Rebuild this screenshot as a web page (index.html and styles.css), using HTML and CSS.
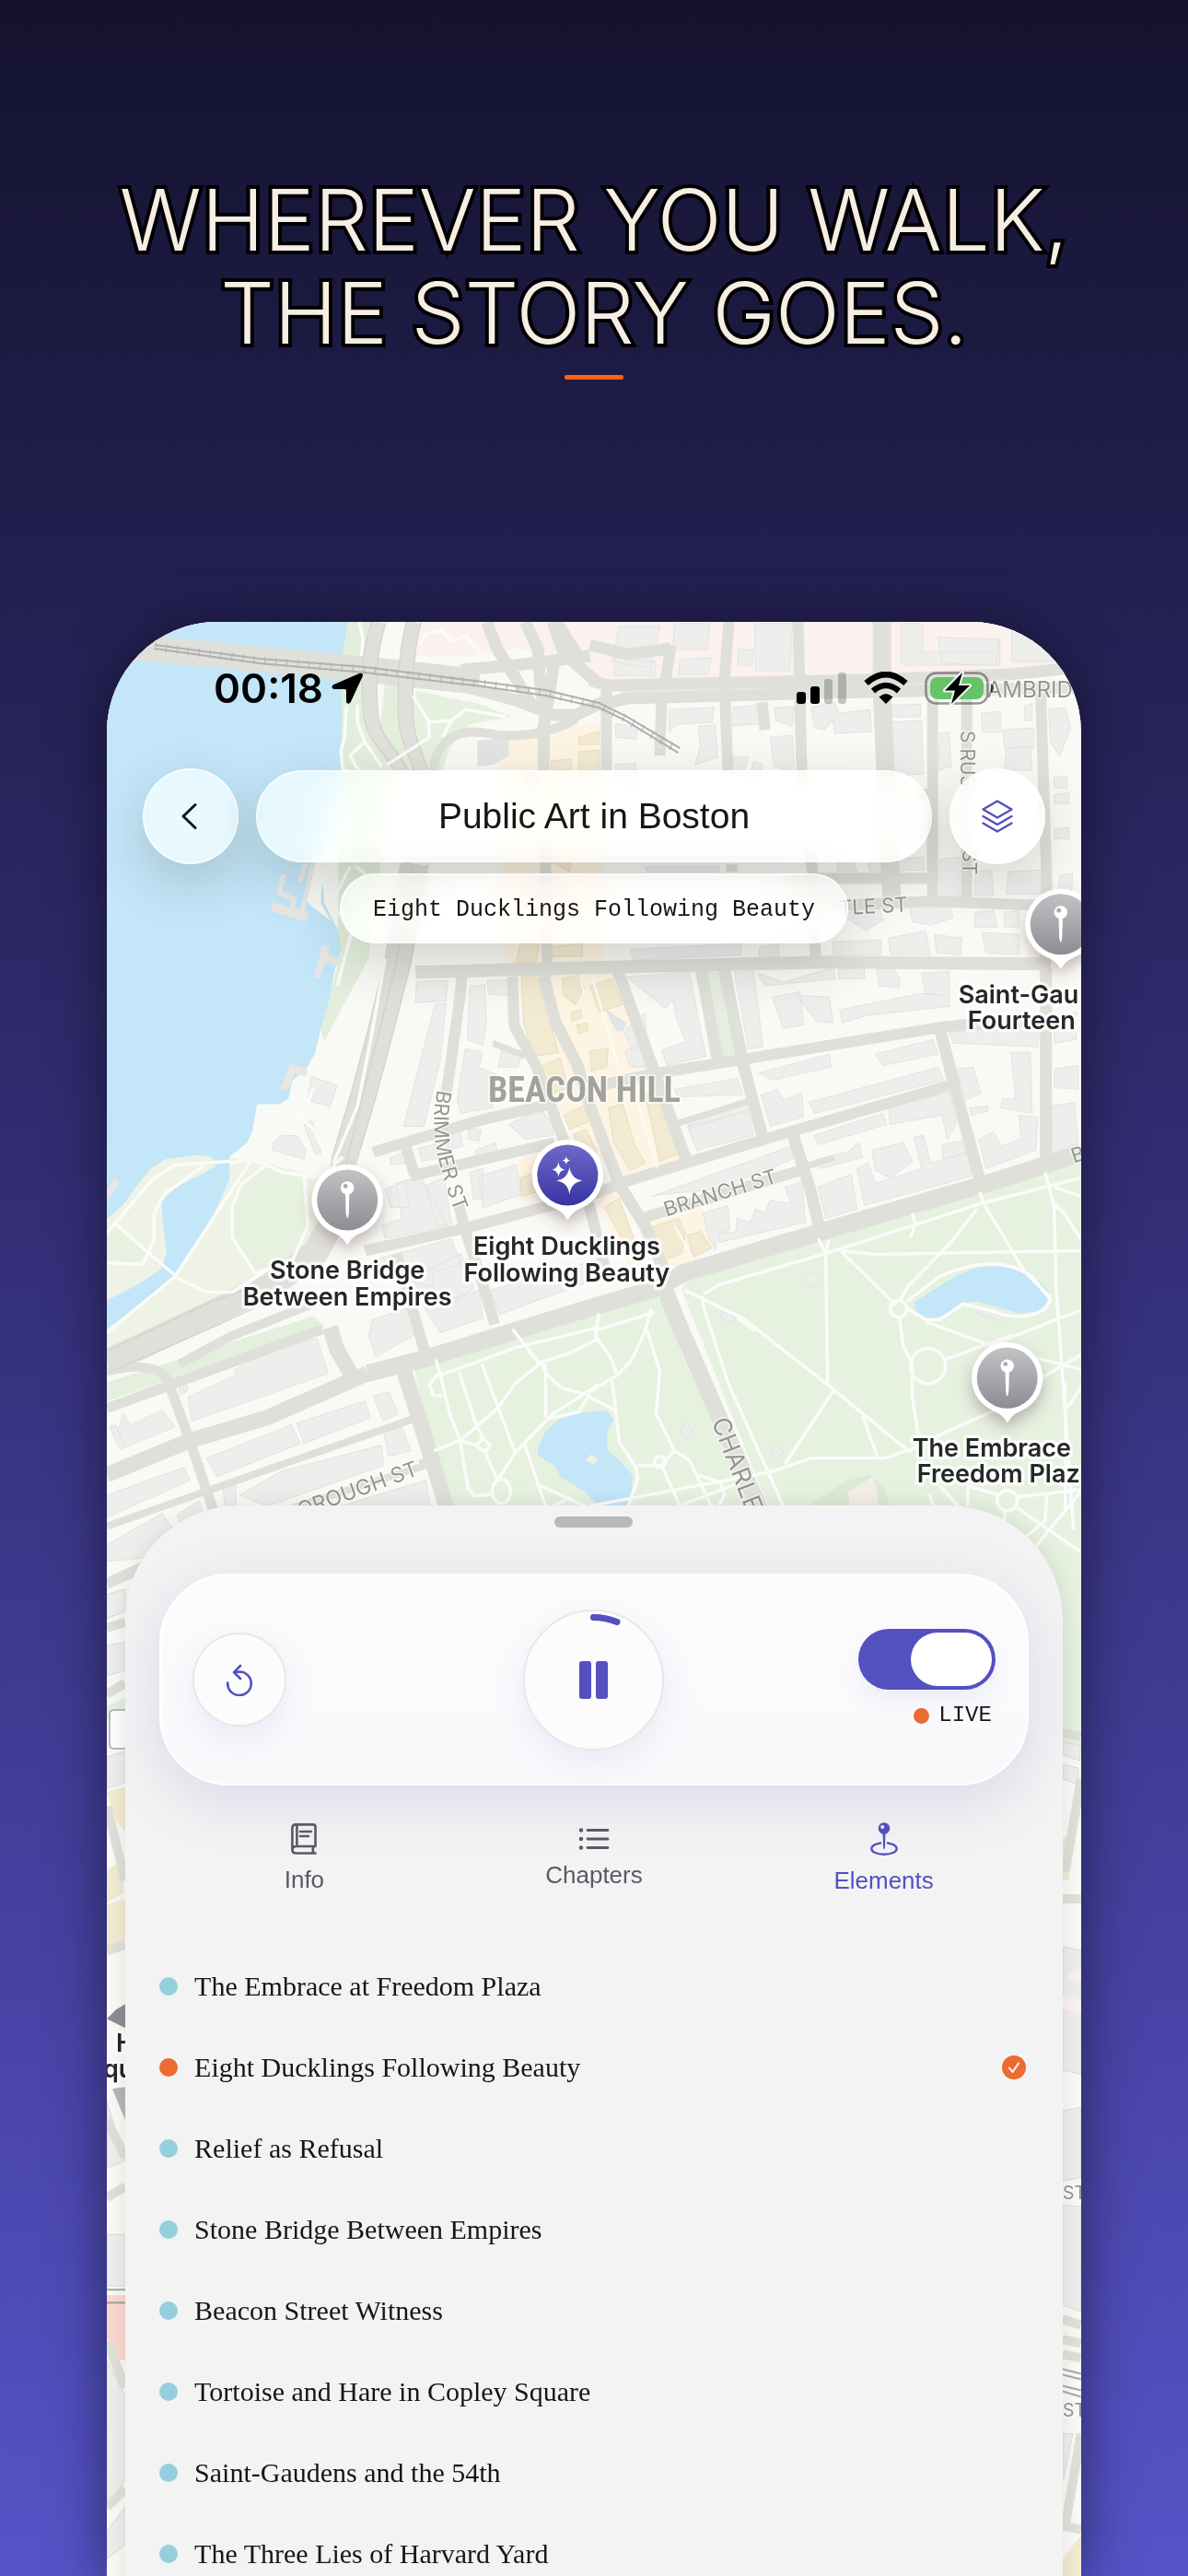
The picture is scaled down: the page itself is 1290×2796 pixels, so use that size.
FILE: index.html
```html
<!DOCTYPE html>
<html lang="en">
<head>
    <meta charset="UTF-8" />
    <meta name="viewport" content="width=device-width, initial-scale=1" />
    <title>Public Art in Boston</title>
    <link rel="stylesheet" href="styles.css">
</head>
<body>

<main class="page">
    <header class="hero">
        <h1>Wherever you walk,<br>the story goes.</h1>
        <div class="hero-line"></div>
    </header>

    <section class="phone">
        <!-- map background -->
        <svg class="map" viewBox="116 675 1057 2121" preserveAspectRatio="xMidYMin slice">
            <defs>
                <linearGradient id="pinGray" x1="0" y1="0" x2="0" y2="1">
                    <stop offset="0" stop-color="#c3c3c6" />
                    <stop offset="1" stop-color="#8d8c92" />
                </linearGradient>
                <linearGradient id="pinBlue" x1="0" y1="0" x2="0" y2="1">
                    <stop offset="0" stop-color="#6d6ac9" />
                    <stop offset="1" stop-color="#3733a3" />
                </linearGradient>
                <filter id="pinShadow" x="-50%" y="-50%" width="200%" height="200%">
                    <feDropShadow dx="0" dy="8" stdDeviation="8" flood-color="#5a3a40" flood-opacity="0.35" />
                </filter>
                <symbol id="marker" viewBox="-50 -50 100 110" overflow="visible">
                    <path fill="#fff" d="M0 -38.500A38.500 38.500 0 0 1 15 35.500C8 38.500 4 42 1.500 46.500Q0 49 -1.500 46.500C-4 42 -8 38.500 -15 35.500A38.500 38.500 0 0 1 0 -38.500Z" />
                </symbol>
                <symbol id="needle" viewBox="-50 -50 100 110" overflow="visible">
                    <circle r="33" fill="url(#pinGray)" />
                    <path fill="#fff" d="M-2.200 -8H2.200L1.600 14Q0 25 -1.600 14Z" />
                    <circle cy="-13" r="7.200" fill="#fff" />
                    <circle cx="-2" cy="-15" r="2.400" fill="#aaaaad" />
                </symbol>
                <path id="brimmer" d="M475 1182Q466 1222 477 1262T496 1320" />
            </defs>

            <rect x="116" y="675" width="1057" height="2121" fill="#f9faf5" />

            <!-- hospital area -->
            <path fill="#fbf1ef" d="M455 675H1173V732L938 742 658 744 628 716 560 704 510 712 446 712Z" />

            <!-- shopping streets -->
            <g fill="#fef4e3">
                <path d="M540 798 652 784 654 1048 549 1052Z" />
                <path d="M561 1058 668 1055 740 1257 672 1280 606 1205 575 1140Z" />
                <path d="M647 1303 668 1292 700 1370 684 1374Z" />
                <path d="M700 1328 763 1312 773 1353 742 1377 718 1370Z" />
                <path d="M563 1258 602 1246 610 1292 562 1304Z" />
            </g>

            <!-- parks -->
            <path fill="#e3efdc" d="M377 675H408L402 760 425 837 400 1040 352 1130 348 1117 366 1050 371 675Z" />
            <path fill="#e3efdc" d="M418 740 436 742 440 780 452 837H432L412 790Z" />
            <path fill="#e6f0de" d="M452 750 520 764 556 778 510 786 488 812 480 837H460L444 772Z" />
            <path fill="#eff3e5" d="M249 1256 290 1262 352 1278 372 1262 340 1345 290 1396 116 1482V1300L230 1255Z" />
            <path fill="#e6f1e0" d="M289 1263 329 1275 334 1327 317 1367 275 1380 253 1340V1307L263 1283Z" />
            <path fill="#e4efdd" d="M116 1500 340 1428 352 1440 116 1520Z" />
            <path fill="#e6f1e0" d="M449 1482 650 1424 712 1405 724 1420 742 1475 826 1640 836 1640 760 1450 740 1400 744 1386 895 1342 1066 1292 1173 1260V1900L480 1640Z" />
            <path fill="#dcead5" d="M877 1634 920 1606 944 1600 958 1612 966 1634Z" />
            <path fill="#f3eee8" d="M920 1618 948 1602 954 1634H922Z" />
            <path fill="#e6efdf" d="M767 1054H780L800 1150 784 1151Z" />
            <path fill="#e5efde" d="M672 748 938 740 1010 735V743L940 750 674 754Z" />

            <!-- water -->
            <path fill="#c3e6f8" d="M116 675H377L371 717V836L348 936 352 980 367 1010 370 1030 363 1053 358 1083 348 1117 342 1143 334 1157 317 1173 313 1192 303 1198H279L274 1227 268 1240 249 1255V1280L237 1307 224 1333 193 1380 155 1413 116 1442Z" />
            <path fill="#eff3e5" d="M116 1323 134 1307 148 1287 165 1267 179 1258 213 1253 230 1255 234 1266 213 1277 193 1287 175 1303 177 1330 181 1360 175 1377 151 1393 116 1411Z" />
            <path fill="#fafaf5" d="M352 928 348 980 360 1000 340 985 330 975 340 928Z" />
            <path fill="#e6f1e0" d="M116 1344 124 1329 162 1362 146 1370 116 1368Z" />
            <path fill="#c3e6f8" d="M992 1413 1012 1400 1040 1383 1061 1375 1085 1373 1110 1378 1131 1393 1138 1402 1136 1413 1128 1423 1106 1425 1061 1412 1043 1413 1026 1427 1008 1431 994 1423Z" />
            <path fill="#c3e6f8" d="M583 1573 592 1553 606 1540 627 1533 658 1530 666 1540 659 1553V1573L675 1587 686 1600V1615L679 1636H652L633 1617 609 1603 602 1590 585 1580Z" />
            <path fill="#edf2e3" d="M635 1584 641 1578 650 1583 644 1589Z" />
            <path fill="none" stroke="#ebe9e5" stroke-width="5" d="M308 949 303 969 319 975 317 988 328 991 340 935M332 936 326 957" />
            <path fill="#e9e7e3" d="M296 979 336 990 333 1000 294 989ZM350 1025 358 1028 356 1036 368 1040 366 1048 354 1044 346 1062 341 1060ZM315 1154 334 1160 332 1168 320 1165 312 1183 304 1181Z" />
            <path fill="#e9e7e3" d="M124 1278 130 1284 118 1300 116 1292Z" />

            <!-- buildings -->
            <g fill="#eeeeed" stroke="#e3e3e2" stroke-width="1">
                <path d="M672 680H716L706 725 664 718ZM732 677H770L768 705H730ZM668 714 712 718 710 734 666 733ZM738 716 772 714 768 732 736 732ZM819 677H860L857 728H820ZM801 704 818 706 816 722 801 722ZM978 677H1001V708H1076L1085 694V722H982L978 718ZM1018 692 1085 694 1080 722 1022 720ZM1098 680 1130 690 1150 712 1148 718H1098Z" />
                <path d="M726 770 775 768 773 784 735 786 726 794ZM668 786 692 788 690 802 668 800ZM758 788 776 787 779 822 754 830 760 810ZM795 768 820 765 828 785 795 788ZM840 768 862 767 860 788 842 782ZM880 768 906 762 910 774 944 770 946 794 906 796 904 782 894 792 884 790ZM963 766 999 764V778H966ZM963 784 1000 782 1002 840 968 842ZM1020 796 1030 794 1032 832 1018 836ZM1065 774 1086 772V795H1066ZM1088 792 1122 790V812H1090ZM1092 812 1118 810 1120 836H1090ZM1112 766 1120 764V782H1112ZM1138 770 1156 768 1162 790 1150 820 1140 806Z" />
                <path d="M790 820 812 822 806 842 790 838ZM818 826 828 830 824 846 812 846ZM836 800 860 798 862 838 840 832ZM668 830 690 828 692 858 668 850Z" />
                <path d="M700 940H780V946H702ZM910 936 926 934 930 945H908ZM942 934 1002 930 1003 944 944 946ZM1020 932 1042 930V972L1020 976ZM1058 946 1076 944 1078 972H1058ZM1094 946 1130 944V970H1092ZM1144 844 1158 842V855H1144ZM1144 862 1160 860V872H1144ZM1144 900 1160 898V910H1144ZM1150 950 1164 948 1162 980 1146 984Z" />
                <path d="M915 978 950 974 958 998 940 1010 918 996ZM986 978 1030 974 1034 996 1010 1004 990 1000ZM1058 990 1078 988 1082 1006 1058 1006ZM1090 990 1106 988V1006H1090Z" />
                <path d="M684 1030 804 1024V1036L688 1042ZM824 1028 844 1024 846 1038 824 1038ZM904 1022 956 1020V1036H904ZM964 1018 1004 1010 1010 1036H966ZM1014 1014 1044 1018 1042 1036 1016 1034ZM1066 1012 1106 1014V1036L1070 1034ZM840 1000 888 996 884 1008H842Z" />
                <path d="M452 1065 486 1064 484 1086 451 1088ZM472 1090 484 1088 478 1150 460 1222 438 1222ZM510 1070 526 1069 528 1112 524 1134 507 1128ZM529 1064 552 1063V1080L530 1079ZM505 1138 524 1142 520 1158 538 1166 534 1202 500 1208 496 1192ZM545 1140 566 1144 562 1158 540 1158Z" />
                <path d="M680 1060 748 1055 766 1146 724 1156 718 1140 744 1130 734 1104 730 1084 722 1094ZM797 1055 818 1054 828 1136 812 1138ZM822 1056 850 1066 904 1050 906 1062 830 1070ZM910 1052 938 1050V1062H910ZM951 1052 970 1050 976 1062 976 1072 954 1070ZM838 1082 868 1076 872 1112 850 1116ZM864 1080 900 1082 904 1110 886 1108ZM911 1096 950 1088 1000 1078 1030 1082V1092L940 1102 914 1110ZM1000 1056 1030 1054V1080L1004 1078ZM1030 1120 1128 1112 1126 1136 1034 1132ZM1144 1102 1168 1098V1128L1144 1132Z" />
                <path d="M690 1105 700 1100 702 1130 686 1140 678 1120ZM678 1140 698 1130 700 1158 684 1158ZM732 1182 800 1170 806 1188 736 1190ZM746 1222 812 1206 818 1232 756 1248ZM744 1216 808 1196 812 1204 750 1224ZM824 1164 900 1144 902 1158 838 1172ZM826 1188 844 1182 850 1194 870 1186 872 1212 836 1222ZM878 1196 1018 1158 1024 1172 884 1208ZM950 1144 1012 1128 1018 1144 958 1156ZM964 1200 1030 1186 1038 1218 1028 1236 1022 1210 966 1220ZM1038 1160 1056 1158 1064 1186 1048 1194ZM1097 1142 1118 1142 1120 1208 1086 1202 1088 1192 1102 1192ZM1052 1202 1072 1200V1206L1054 1210ZM1106 1210 1126 1212 1124 1248 1070 1268 1062 1236 1078 1228 1086 1244 1108 1236ZM1144 1160 1170 1156V1182L1144 1180ZM1142 1200 1166 1196 1170 1240 1142 1250Z" />
                <path d="M883 1232 958 1208 962 1220 888 1242ZM886 1258 920 1250 932 1240 936 1256 890 1268ZM946 1248 980 1240 990 1260 966 1278 950 1270ZM992 1234 1002 1232 1010 1262 1050 1250 1054 1276 938 1308 930 1268 942 1262 950 1284 1000 1268ZM1022 1242 1044 1238 1048 1252 1024 1258ZM888 1288 908 1280 924 1274 930 1312 896 1322Z" />
                <path d="M708 1298 752 1282 858 1244 864 1256 780 1290 716 1296ZM763 1316 790 1308 792 1334 780 1338V1348L874 1326 870 1282 852 1288 858 1306 836 1302 830 1316 820 1312 814 1326 800 1322 798 1338 780 1336 776 1356 768 1340Z" />
                <path d="M454 1246 478 1240 480 1256 458 1260ZM484 1232 500 1228 502 1244 484 1248ZM508 1224 522 1226 520 1238 508 1236ZM516 1248 538 1240 540 1252 518 1258ZM552 1220 586 1204 602 1220 600 1232 570 1236ZM520 1276 560 1264 566 1296 524 1310ZM430 1284 456 1276 486 1330 418 1344 414 1330 436 1322ZM424 1256 440 1250 440 1262 424 1264ZM462 1286 482 1278 490 1328 474 1330ZM418 1290 440 1282 444 1310 424 1310ZM510 1272 524 1268V1300L514 1302Z" />
                <path d="M338 1168 366 1178 358 1201 334 1194ZM297 1239 306 1232 322 1232 332 1248 330 1258 296 1248ZM330 1220 338 1216 348 1240V1252H342Z" />
                <path d="M410 1366 490 1344 500 1372 470 1380V1396L420 1384ZM450 1386 500 1360 514 1398 484 1420 452 1414ZM532 1400 650 1366 652 1386 542 1426ZM404 1432 446 1418 454 1446 408 1472 400 1450ZM460 1418 520 1400 524 1430 478 1446Z" />
                <path d="M271 1474 344 1452 356 1490 208 1542 204 1516 216 1510 256 1492 254 1488ZM194 1504 202 1500 204 1508 196 1514ZM134 1534 142 1546 176 1530 190 1548 136 1570 128 1552ZM119 1548 126 1546 136 1570 130 1572ZM224 1582 316 1546 326 1566 236 1602ZM322 1544 396 1520 402 1538 330 1566ZM405 1514 422 1510 432 1534 416 1542ZM116 1622 200 1592 206 1606 116 1646ZM260 1622 306 1596 414 1568 416 1590 290 1634ZM416 1552 436 1548 446 1574 422 1580ZM350 1640 462 1606 468 1640ZM192 1644 216 1628 220 1640 196 1652ZM116 1676 176 1642 190 1662 160 1690 116 1694ZM242 1614 256 1610V1636L244 1636Z" />
                <path d="M874 1386 886 1382 890 1392 880 1396ZM782 1426 792 1422 798 1432 788 1436ZM1058 1416 1090 1426 1088 1434 1060 1424ZM738 1550 746 1544 752 1556 742 1560ZM836 1572 846 1568 850 1576 842 1582Z" />
            </g>
            <g fill="#f3ead2" stroke="#eaddbf" stroke-width="1">
                <path d="M628 800 650 794V808H628ZM628 816 650 814V840H628ZM598 826 620 824V836H598ZM600 936 620 934 618 946ZM565 1024 585 1024 582 1044 560 1044ZM592 1028 632 1024V1038H594ZM566 1060 588 1058 590 1084 606 1142 580 1146 568 1110ZM583 1158 608 1148 616 1180 596 1188ZM610 1062 630 1058 634 1072 624 1090 612 1080ZM664 1062 676 1090 650 1098 640 1070ZM640 1140 660 1138 658 1158 642 1162ZM612 1210 634 1200 640 1216 618 1226ZM622 1230 636 1226 648 1250 630 1252ZM660 1202 676 1198 688 1240 700 1262 684 1270 666 1240ZM700 1188 718 1190 736 1252 716 1260ZM656 1310 672 1300 690 1350 684 1360ZM706 1332 736 1322 744 1338 740 1360 722 1366ZM746 1340 760 1336 772 1354 752 1364ZM565 1278 600 1266 604 1288 566 1298ZM620 1098 630 1096 632 1104 620 1108ZM626 1112 638 1110V1118L628 1122Z" />
            </g>
            <g fill="#e3e4e6">
                <path d="M518 804 552 800V820L536 830 518 832ZM656 1094 680 1110 676 1120 668 1118Z" />
            </g>

            <!-- roads -->
            <g fill="none" stroke="#e0e0da" stroke-linejoin="round">
                <path stroke-width="28" d="M116 700 151 703 400 727 520 740" />
                <path stroke-width="13" d="M500 727 560 722 640 712M500 744 560 760 600 776 625 776 658 760M528 675 540 705 562 740 580 770M570 675 584 705 586 740 590 770M600 675 612 710 650 742M604 675 632 720M602 716 590 790 590 837" />
                <path stroke-width="16" d="M411 675C399 715 400 735 402 770S422 808 436 838M449 675C440 710 440 740 440 770S448 808 458 840" />
                <path stroke-width="28" d="M450 937 432 1045 412 1123 394 1190 374 1257 362 1323 342 1360 300 1390 230 1425 116 1478" />
                <path stroke-width="10" d="M470 837C474 800 500 790 530 796S600 796 625 780M350 1410 250 1450 195 1480M116 1488Q170 1474 184 1500" />
                <path stroke-width="12" d="M658 740V838M791 675 786 740 790 838M866 675 870 837 882 950 885 1045M1012 760V980M1049 750V983M1129 745 1136 960 1134 1060M718 760 716 820M827 762 830 792M728 700 722 740M794 938V946" />
                <path stroke-width="20" d="M957 675V750L962 860 968 980" />
                <path stroke-width="13" d="M640 700 680 710 728 704M640 738 660 744 938 738 1096 732 1173 724M650 765 680 758 900 752 1173 746" />
                <path stroke-width="12" d="M850 956 886 953H1012M900 983 1010 978 1173 984M1012 862H990M1012 900V956M592 932 594 1060" />
                <path stroke-width="14" d="M451 1055 640 1050 900 1044 1134 1046M575 838 594 937" />
                <path stroke-width="13" d="M590 1060 602 1107 627 1157 640 1200 673 1287 700 1330 728 1395M668 1047 710 1163 745 1260M761 1053 780 1157M786 1053 807 1157 829 1240M861 1233 880 1293 891 1340M1021 1120 1036 1180 1064 1283M1135 1050V1265" />
                <path stroke-width="12" d="M654 1177 710 1165 815 1148 1019 1115 1047 1112 1135 1108M405 1250 523 1215 602 1197M446 1276 602 1240M396 1357 503 1333 650 1294 672 1284 833 1235 1033 1177M696 1322 868 1270M556 1060 558 1113 582 1157 609 1230 640 1310 660 1390M501 1060 499 1083 484 1190M440 1243 450 1275M497 1305 505 1335 523 1390 537 1437M430 1360 462 1470" />
                <path stroke-width="7" d="M735 1219 815 1194M535 1132 570 1146M868 1268 905 1256" />
                <path stroke-width="19" d="M1173 1250 1135 1264 1064 1286 893 1336 742 1381 712 1398 650 1416 461 1474 399 1490" />
                <path stroke-width="17" d="M399 1490 365 1505 290 1538 206 1563 116 1600M358 1440 366 1465 385 1498M436 1480 452 1530 486 1640" />
                <path stroke-width="18" d="M720 1395 738 1440 780 1537 826 1640" />
                <path stroke-width="11" d="M182 1498 205 1560 232 1640M116 1528 350 1442" />
                <path stroke-width="8" d="M447 1540 320 1584 116 1656M461 1590 317 1636M455 1588 470 1584" />
                <path stroke-width="12" d="M116 1718 160 1698" />
            </g>
            <g fill="none" stroke="#cfcfc8" stroke-width="1">
                <path d="M465 937 446 1045 426 1123 408 1190 388 1257M435 937 418 1040 398 1123 380 1190 360 1257M448 940 430 1045 410 1125 392 1195 376 1262 358 1335M403 675C391 715 392 735 394 770S414 808 428 838M457 675C448 710 448 740 448 770S456 808 466 840M441 675C432 710 432 740 432 770S440 808 450 840M419 675C407 715 408 735 410 770S430 808 444 838M116 1466 230 1412 280 1394M116 1490 236 1438 300 1408" />
            </g>

            <!-- rail -->
            <g fill="none" stroke="#b0b0b0">
                <path stroke-width="2" d="M168 700 282 715 396 724 523 740 592 749 650 763 679 777 738 812M168 704 282 720 396 730 523 745 592 755 650 768 679 782 736 817" />
                <path stroke-width="9" stroke-dasharray="1 11" d="M168 702 282 717 396 727 523 742 592 752 650 766 679 780 737 815" />
            </g>

            <!-- footpaths -->
            <g fill="none" stroke="#fbfcfa" stroke-width="3.500" stroke-linejoin="round">
                <path d="M390 675 394 695 392 712M376 765 374 800 370 815 372 836 380 837M396 805 380 820 390 838M388 765V785L396 805 414 832M448 755 465 782 466 800 420 830M465 784 490 782 505 770 550 778M490 782 480 800M455 700 462 688 480 684 490 696 506 690 520 708" />
                <path d="M380 940 360 980 382 1010 366 1070M386 940 398 950 378 978M418 1040 402 1130 388 1200 362 1262M340 1180 328 1215M249 1262 272 1258 289 1264 306 1272 349 1278 372 1255M279 1212Q310 1196 340 1225L358 1262M116 1338 165 1280 190 1264 249 1260M222 1264 178 1296 167 1318V1345L155 1372 116 1370M124 1327 162 1360 195 1388 225 1402 252 1402 290 1378M272 1260 190 1385 116 1446M289 1264 262 1285 252 1310V1342L276 1380M330 1275 334 1330 318 1366 276 1382" />
                <path d="M473 1475 478 1492 488 1534 499 1562 508 1615 515 1623 536 1621M478 1492 560 1462 650 1440M556 1442 584 1478 588 1478M498 1488 517 1546 524 1560M523 1480 559 1576M650 1452 618 1468 588 1478 560 1500 540 1528 499 1563 471 1574M588 1478 592 1490 610 1506 640 1514M592 1480V1538M650 1502 600 1534 560 1575 540 1606M640 1512 628 1532 592 1540M569 1566 592 1634M524 1560 532 1568 526 1576 517 1568ZM525 1572 540 1606M499 1563 518 1568M582 1610 635 1634M600 1634 620 1624M478 1488 466 1502 470 1514 480 1514" />
                <ellipse cx="544" cy="1618" rx="10" ry="13" />
                <path d="M644 1444 710 1424M650 1425 646 1450 662 1472 670 1492M707 1420 700 1444 686 1475 670 1492 640 1510M702 1443 716 1488 712 1534 732 1574 718 1590 692 1590M640 1516 668 1530 672 1564 690 1592 692 1604 682 1634M664 1498 668 1528M718 1590 738 1634M732 1574 748 1584 772 1634M756 1600 782 1608 786 1622 780 1634M736 1634 800 1610M764 1420 790 1500 850 1634" />
                <circle cx="716" cy="1586" r="6" />
                <path d="M743 1400 806 1430 900 1504 988 1576M764 1404 780 1394 896 1360 1064 1306 1173 1278M762 1406 764 1420M896 1360 898 1500M888 1344 896 1360 899 1346M988 1343 993 1328 990 1316M912 1357 972 1416M912 1357 950 1361 1173 1357M1063 1293 1070 1310 1112 1380 1140 1408M1060 1312 1030 1350 985 1396 976 1412M1134 1272 1144 1310 1146 1400 1150 1450 1165 1660M1144 1306 1156 1318 1173 1345M1144 1288 1173 1298" />
                <path d="M984 1412 1020 1385Q1080 1358 1120 1385L1140 1410 1134 1420Q1110 1436 1076 1422L1045 1415 1020 1432H1004L985 1420M1005 1434 1075 1460 1150 1430 1173 1422M976 1430 980 1460 990 1480 990 1515 996 1556M1026 1475 1100 1448M800 1430 820 1444" />
                <circle cx="975" cy="1420" r="9" /><circle cx="1007" cy="1482" r="19" />
                <path d="M640 1634 840 1596 880 1582 960 1582 990 1572 1030 1552 1080 1530 1130 1495 1173 1470M905 1508 852 1588M936 1536 952 1580M1120 1472 1173 1486M1156 1530 1173 1505M1156 1500V1640" />
                <path d="M1020 1612 1040 1634M1008 1620 1014 1636M1050 1612V1634M1090 1640V1655M1084 1622 1050 1612M1104 1636 1173 1684M1104 1624 1173 1616M1136 1622 1134 1650 1110 1670M1173 1618 1122 1680" />
                <circle cx="1093" cy="1628" r="11" />
                <path stroke-width="2" d="M642 1058 672 1160M690 1190 714 1268M732 1330 752 1366M630 1058 634 1080" />
            </g>

            <!-- map edges next to the sheet -->
            <g fill="#eeeeed" stroke="#dcdcdb" stroke-width="1">
                <path d="M116 1730 136 1724V1748L116 1756ZM116 1785 136 1782V1812L116 1818ZM116 1906 136 1900V1934L116 1940ZM1154 1890 1172 1894V1910L1154 1904ZM1154 1914 1170 1918V1936L1154 1930ZM116 2280 136 2344 116 2352ZM116 2424H136V2480H116ZM1154 2112 1173 2116V2250L1154 2246ZM1153 2290 1173 2286V2362L1153 2366ZM1153 2392 1173 2394V2508L1153 2500ZM116 2560 136 2600V2690L116 2720ZM1154 2640 1164 2640 1154 2690ZM116 2746 136 2720V2760L116 2776Z" />
            </g>
            <path fill="#e6f1e0" d="M116 1850 136 1842V1860L116 1866ZM1153 1700H1173V1874H1153Z" />
            <path fill="#f3ead2" d="M116 1944 136 1938V1988L126 1976ZM116 2030 134 2016V2054L116 2064ZM116 2066 136 2060V2106L116 2112ZM1153 1994 1160 1990V2040H1153ZM1153 2776 1173 2750V2796H1153Z" />
            <path fill="#fbd9d0" d="M116 2490H136V2560L126 2560 116 2536Z" />
            <path fill="#8b8f93" d="M126 2180 136 2174V2200L116 2190Z" />
            <path fill="#b4b6b8" d="M122 2266 136 2264V2300Z" />
            <path fill="#fbf1ef" d="M1160 2140 1173 2136V2148L1158 2150ZM1153 2164 1173 2170V2184L1153 2180Z" />
            <g fill="none" stroke="#e0e0da" stroke-width="10">
                <path d="M116 1766 136 1760M116 1838 136 1826M116 1960 136 2040M116 2116 136 2110M116 2300 136 2340M116 2384 136 2372M116 2540 136 2590M116 2720 136 2700M1153 1880 1173 1884M1173 1930 1156 2030M1153 2060H1173M1153 2516 1173 2522M1153 2538 1173 2542M1153 2554 1173 2558M1173 2640 1156 2740M1153 2740 1173 2744" />
            </g>
            <path fill="none" stroke="#a8a8a8" stroke-width="2" d="M1153 2570 1173 2575M1153 2576 1173 2581M1153 2588 1173 2593M1153 2594 1173 2600M116 2484H136M116 2498H136" />
            <path fill="#fff" stroke="#bbb" stroke-width="2" d="M136 1855H124Q119 1855 119 1860V1892Q119 1897 124 1897H136" />

            <!-- street names -->
            <g class="street">
                <text x="1071" y="757" font-size="24">AMBRID</text>
                <text transform="translate(1042 793) rotate(90)" font-size="21">S RUS</text>
                <text transform="translate(1044 922) rotate(90)" font-size="21">ST</text>
                <text transform="translate(911 993) rotate(-3)" font-size="22">TLE ST</text>
                <text font-size="22"><textPath href="#brimmer">BRIMMER ST</textPath></text>
                <text transform="translate(723 1320) rotate(-17)" font-size="22">BRANCH ST</text>
                <text transform="translate(1165 1262) rotate(-17)" font-size="22">B</text>
                <text transform="translate(312 1652) rotate(-20)" font-size="23">BOROUGH ST</text>
                <text transform="translate(772 1542) rotate(69)" font-size="27">CHARLE</text>
                <text x="1153" y="2386" font-size="20">ST</text>
                <text x="1153" y="2622" font-size="20">ST</text>
            </g>
            <text class="district" x="634" y="1196" text-anchor="middle">BEACON HILL</text>

            <!-- pins -->
            <a href="#stone-bridge" class="pin">
                <g filter="url(#pinShadow)"><use href="#marker" x="327" y="1252" width="100" height="110" /></g>
                <use href="#needle" x="327" y="1252" width="100" height="110" />
                <text x="377" y="1387" text-anchor="middle">Stone Bridge<tspan x="377" dy="29">Between Empires</tspan></text>
            </a>
            <a href="#saint-gaudens" class="pin">
                <g filter="url(#pinShadow)"><use href="#marker" x="1101" y="953" width="100" height="110" /></g>
                <use href="#needle" x="1101" y="953" width="100" height="110" />
                <text x="1040" y="1089">Saint-Gau<tspan x="1050" dy="28">Fourteen</tspan></text>
            </a>
            <a href="#embrace" class="pin">
                <g filter="url(#pinShadow)"><use href="#marker" x="1043" y="1445" width="100" height="110" /></g>
                <use href="#needle" x="1043" y="1445" width="100" height="110" />
                <text x="990" y="1580">The Embrace<tspan x="995" dy="28">Freedom Plaz</tspan></text>
            </a>
            <a href="#eight-ducklings" class="pin">
                <g filter="url(#pinShadow)"><use href="#marker" x="566" y="1225" width="100" height="110" /></g>
                <circle cx="616" cy="1275" r="33" fill="url(#pinBlue)" />
                <path fill="#fff" d="M618 1266Q619.500 1279 632 1281 619.500 1283 618 1296 616.500 1283 604 1281 616.500 1279 618 1266ZM606 1261Q607 1268 613 1269 607 1270 606 1277 605 1270 599 1269 605 1268 606 1261ZM614.500 1254.500Q615 1258.500 619 1259 615 1259.500 614.500 1263.500 614 1259.500 610 1259 614 1258.500 614.500 1254.500Z" />
                <text x="615" y="1361" text-anchor="middle">Eight Ducklings<tspan x="615" dy="29">Following Beauty</tspan></text>
            </a>
            <g class="edge-label">
                <text x="126" y="2226">H</text>
                <text x="112" y="2254">qu</text>
            </g>
        </svg>

        <div class="status-bar">
            <div class="clock">
                <span>00:18</span>
                <svg width="35" height="35" viewBox="0 0 35 35"><path d="M33.500 4.500 21 31.500C19.500 35 16 34 16 31V19.500Q16 18 14.500 18H3.500C0 18 -.500 14.500 2.500 13L30 1C33 0 35 2 33.500 4.500Z" /></svg>
            </div>
            <div class="indicators">
                <svg width="55" height="36" viewBox="0 0 55 36">
                    <rect x="0" y="22" width="10" height="13" rx="3" />
                    <rect x="15" y="16" width="10" height="19" rx="3" />
                    <rect x="30" y="8" width="9" height="27" rx="3" opacity=".22" />
                    <rect x="45" y="1" width="9" height="34" rx="3" opacity=".22" />
                </svg>
                <svg width="48" height="36" viewBox="0 0 48 36">
                    <path d="M24 35 16.500 27.500Q24 20.500 31.500 27.500Z" />
                    <path d="M10 21Q24 9 38 21M2.500 12.500Q24 -6.500 45.500 12.500" fill="none" stroke="#000" stroke-width="6.500" />
                </svg>
                <svg width="76" height="38" viewBox="0 0 76 38">
                    <rect x="1.500" y="2.500" width="67" height="33" rx="11" fill="none" stroke="#000" stroke-opacity=".4" stroke-width="2.500" />
                    <rect x="6" y="7" width="58" height="24" rx="8" fill="#65c466" />
                    <path d="M72 14Q78 19 72 24Z" opacity=".7" />
                    <path d="M41 2 22 21.500H33L29 36 49 16H37Z" stroke="#f4f4f2" stroke-width="4" stroke-linejoin="round" paint-order="stroke" />
                </svg>
            </div>
        </div>

        <nav class="top-bar">
            <button class="glass round" type="button" aria-label="Back">
                <svg width="20" height="30" viewBox="0 0 20 30"><path d="M15 2.500 2 15 15 27.500" fill="none" stroke="#151515" stroke-width="3" stroke-linecap="round" stroke-linejoin="round" /></svg>
            </button>
            <h2 class="glass title">Public Art in Boston</h2>
            <button class="glass round" type="button" aria-label="Layers">
                <svg width="34" height="36" viewBox="0 0 34 36"><path d="M17 1.500 32.500 10.500 17 19.500 1.500 10.500ZM1.500 18 17 27 32.500 18M1.500 25.500 17 34.500 32.500 25.500" fill="none" stroke="#5450c0" stroke-width="2.400" stroke-linecap="round" stroke-linejoin="round" /></svg>
            </button>
        </nav>
        <p class="glass now">Eight Ducklings Following Beauty</p>

        <div class="sheet">
            <div class="grabber"></div>

            <div class="player">
                <button class="replay" type="button" aria-label="Replay">
                    <svg width="32" height="36" viewBox="0 0 32 36"><path d="M3.200 21.500A12.800 12.800 0 1 0 16 9.500L10.500 10.200M17 3 10 10.200 17 17" fill="none" stroke="#5450c0" stroke-width="2.600" stroke-linecap="round" stroke-linejoin="round" /></svg>
                </button>
                <button class="pause" type="button" aria-label="Pause">
                    <svg viewBox="0 0 153 153">
                        <path d="M76.500 8.500A68 68 0 0 1 102 13.500" fill="none" stroke="#5450c0" stroke-width="7" stroke-linecap="round" />
                        <rect x="61" y="56" width="13" height="41" rx="3" fill="#5450c0" />
                        <rect x="79" y="56" width="13" height="41" rx="3" fill="#5450c0" />
                    </svg>
                </button>
                <div class="live">
                    <input type="checkbox" role="switch" id="live" class="switch" checked>
                    <label for="live"><span class="dot"></span>LIVE</label>
                </div>
            </div>

            <div class="tabs">
                <button type="button">
                    <svg width="28" height="34" viewBox="0 0 28 34" fill="none" stroke="currentColor" stroke-width="2.600" stroke-linecap="round" stroke-linejoin="round">
                        <path d="M26.500 32.500H5.500Q1.400 32.500 1.400 28.500V5Q1.400 1.400 5 1.400H23.500Q26.500 1.400 26.500 4V25H6Q1.400 25 1.400 29M6.400 1.500V25M24.500 25.500Q22.500 29 25 32.500M10 9H22M10 14H19" />
                    </svg>
                    <span>Info</span>
                </button>
                <button type="button">
                    <svg width="34" height="24" viewBox="0 0 34 24" fill="none" stroke="currentColor" stroke-width="2.800" stroke-linecap="round">
                        <path d="M10 2.500H32M10 12H32M10 21.500H32" />
                        <path stroke-width="4.500" d="M3 2.500H3.010M3 12H3.010M3 21.500H3.010" />
                    </svg>
                    <span>Chapters</span>
                </button>
                <button type="button" class="active">
                    <svg width="30" height="36" viewBox="0 0 30 36">
                        <path d="M11 22.500C5 23.500 1.300 25.800 1.300 28.700C1.300 32.200 7.500 34.700 15 34.700S28.700 32.200 28.700 28.700C28.700 25.800 25 23.500 19 22.500" fill="none" stroke="currentColor" stroke-width="2.400" stroke-linecap="round" />
                        <path d="M13.500 10H16.500L16 27Q15 32 14 27Z" fill="currentColor" />
                        <circle cx="15" cy="6.500" r="6.300" fill="currentColor" />
                        <circle cx="13.200" cy="5" r="2" fill="#f0f0f4" />
                    </svg>
                    <span>Elements</span>
                </button>
            </div>

            <ul class="elements">
                <li><span class="dot"></span>The Embrace at Freedom Plaza</li>
                <li class="current"><span class="dot"></span>Eight Ducklings Following Beauty
                    <svg class="check" width="26" height="26" viewBox="0 0 26 26"><circle cx="13" cy="13" r="13" fill="#ed6a32" /><path d="M8 13.500 11.500 18 18 8.500" fill="none" stroke="#fff" stroke-width="2" stroke-linecap="round" stroke-linejoin="round" /></svg>
                </li>
                <li><span class="dot"></span>Relief as Refusal</li>
                <li><span class="dot"></span>Stone Bridge Between Empires</li>
                <li><span class="dot"></span>Beacon Street Witness</li>
                <li><span class="dot"></span>Tortoise and Hare in Copley Square</li>
                <li><span class="dot"></span>Saint-Gaudens and the 54th</li>
                <li><span class="dot"></span>The Three Lies of Harvard Yard</li>
            </ul>
        </div>
    </section>
</main>

</body>
</html>
```
FILE: styles.css
```css
* {
    box-sizing: border-box;
}

body {
    margin: 0;
    font-family: "Liberation Sans", Arial, sans-serif;
    color: #161616;
}

.page {
    height: 100vh;
    overflow: hidden;
    display: flex;
    flex-direction: column;
    align-items: center;
    background: linear-gradient(180deg, #14122e 0%, #35307a 50%, #5653c8 100%);
}

.hero {
    padding: 188px 24px 263px;
    text-align: center;
}

h1 {
    margin: 0;
    font-family: Inter, sans-serif;
    font-size: 92px;
    font-weight: 300;
    line-height: 101px;
    text-transform: uppercase;
    color: #f6eee4;
    -webkit-text-stroke: 8px #000;
    paint-order: stroke fill;
    stroke-linejoin: round;
}

.hero-line {
    width: 64px;
    height: 5px;
    margin: 17px auto 0;
    border-radius: 2px;
    background: #fd6216;
}

/* phone */
.phone {
    position: relative;
    flex: 1;
    min-height: 0;
    width: 82%;
    border-radius: 120px 120px 0 0;
    overflow: hidden;
    box-shadow: 0 8px 60px rgba(0, 0, 0, 0.5);
    background: #f9faf5;
}

.map {
    position: absolute;
    top: 0;
    left: 0;
    width: 100%;
    height: 100%;
}

.map text {
    font-family: Inter, sans-serif;
    paint-order: stroke fill;
    stroke-linejoin: round;
}

.street text {
    fill: #96968f;
    stroke: rgba(255, 255, 255, 0.6);
    stroke-width: 3px;
}

.map .district {
    font-family: "Liberation Sans Narrow", "Roboto Condensed", Roboto, sans-serif;
    font-size: 38px;
    font-weight: 700;
    fill: #a3a39e;
    stroke: rgba(255, 255, 255, 0.6);
    stroke-width: 4px;
}

.pin text,
.edge-label text {
    font-size: 27px;
    font-weight: 600;
    fill: #262729;
    stroke: rgba(255, 255, 255, 0.75);
    stroke-width: 7px;
}

.status-bar {
    position: relative;
    display: flex;
    justify-content: space-between;
    align-items: center;
    height: 144px;
    padding: 0 94px 0 116px;
}

.clock {
    display: flex;
    align-items: center;
    gap: 9px;
    font-family: Inter, sans-serif;
    font-size: 44px;
    font-weight: 600;
    color: #000;
}

.indicators {
    display: flex;
    align-items: center;
    gap: 18px;
}

.top-bar {
    position: relative;
    display: flex;
    align-items: center;
    gap: 19px;
    margin-top: 15px;
    padding: 0 39px;
}

.glass {
    margin: 0;
    border: 2px solid rgba(255, 255, 255, 0.6);
    background: rgba(255, 255, 255, 0.55);
    backdrop-filter: blur(14px) brightness(1.06);
    box-shadow: 0 20px 60px rgba(0, 0, 0, 0.16);
}

.round {
    display: flex;
    align-items: center;
    justify-content: center;
    width: 104px;
    height: 104px;
    padding: 0;
    border-radius: 50%;
}

.title {
    flex: 1;
    height: 100px;
    border-radius: 50px;
    font-size: 39px;
    font-weight: 400;
    line-height: 96px;
    text-align: center;
}

.now {
    position: relative;
    width: fit-content;
    margin: 10px auto 0;
    padding: 4px 34px 0;
    border-radius: 38px;
    font-family: "Liberation Mono", monospace;
    font-size: 25px;
    line-height: 68px;
}

/* bottom sheet */
.sheet {
    position: relative;
    height: 1200px;
    margin: 610px 20px 0;
    padding: 12px 37px 0;
    border-radius: 124px 124px 0 0;
    background: #f3f3f3;
    box-shadow: 0 0 24px rgba(0, 0, 0, 0.1);
}

.grabber {
    width: 85px;
    height: 12px;
    margin: 0 auto 50px;
    border-radius: 6px;
    background: #b8b8ba;
}

.player {
    display: grid;
    grid-template-columns: 1fr auto 1fr;
    align-items: center;
    height: 230px;
    padding: 0 34px;
    border: 2px solid #fff;
    border-radius: 76px;
    background: linear-gradient(180deg, #fcfcfd, #f9f9fc);
    box-shadow: 0 16px 60px rgba(84, 80, 192, 0.16);
}

.replay,
.pause {
    display: flex;
    align-items: center;
    justify-content: center;
    padding: 0;
    border: 2px solid #e8e8e8;
    border-radius: 50%;
    background: #fcfcfd;
    box-shadow: 0 12px 36px rgba(84, 80, 192, 0.1);
}

.replay {
    width: 102px;
    height: 102px;
}

.pause {
    width: 153px;
    height: 153px;
}

.pause svg {
    flex: none;
    width: 153px;
    height: 153px;
}

.live {
    display: flex;
    flex-direction: column;
    align-items: flex-end;
    gap: 12px;
}

.switch {
    appearance: none;
    display: flex;
    justify-content: flex-end;
    width: 149px;
    height: 66px;
    margin: 0;
    padding: 4px;
    border-radius: 33px;
    background: #5450c0;
    box-shadow: 0 12px 24px rgba(84, 80, 192, 0.08);
}

.switch::before {
    content: "";
    width: 88px;
    height: 58px;
    border-radius: 29px;
    background: #fff;
}

.switch:not(:checked) {
    justify-content: flex-start;
    background: #c9c9ce;
}

.live label {
    display: flex;
    align-items: center;
    gap: 10px;
    padding-right: 4px;
    font-family: "Liberation Mono", monospace;
    font-size: 24px;
    line-height: 32px;
}

.live .dot {
    width: 17px;
    height: 17px;
    border-radius: 50%;
    background: #ed6a32;
}

.tabs {
    display: grid;
    grid-template-columns: repeat(3, 1fr);
    align-items: center;
    height: 86px;
    margin-top: 36px;
}

.tabs button {
    display: flex;
    flex-direction: column;
    align-items: center;
    gap: 12px;
    padding: 0;
    border: none;
    background: none;
    font-family: inherit;
    font-size: 26px;
    line-height: 30px;
    color: #5b5865;
}

.tabs .active {
    color: #5450c0;
}

.elements {
    margin: 52px 0 0;
    padding: 0;
    list-style: none;
    font-family: "Liberation Serif", "Times New Roman", serif;
    font-size: 30px;
}

.elements li {
    display: flex;
    align-items: center;
    gap: 18px;
    height: 88px;
    padding-right: 3px;
}

.elements .dot {
    width: 20px;
    height: 20px;
    border-radius: 50%;
    background: #95cfdd;
}

.elements .current .dot {
    background: #ed6a32;
}

.check {
    margin-left: auto;
}
```
